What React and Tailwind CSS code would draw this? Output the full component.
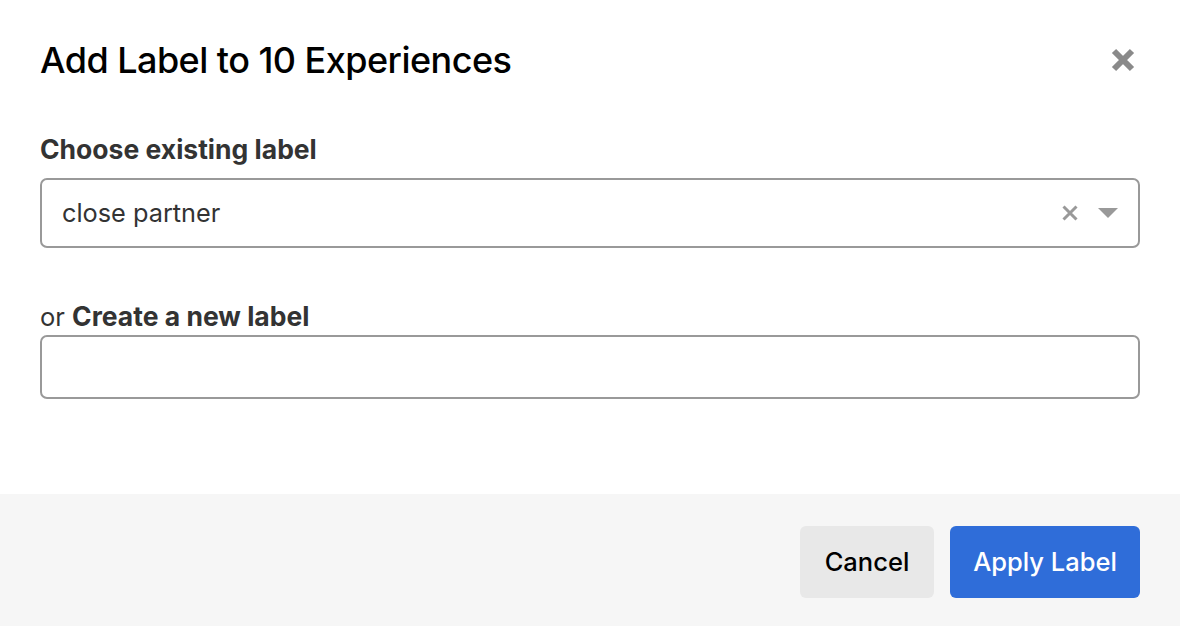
export default function App() {
  return (
    <div className="w-[1180px] h-[626px] bg-white flex flex-col font-['Inter',sans-serif] overflow-hidden">
      {/* Header */}
      <div className="flex items-center justify-between pl-10 pr-11 pt-[40px]">
        <h1 className="text-[36px] leading-[40px] font-medium text-black tracking-[-0.015em]">
          Add Label to 10 Experiences
        </h1>
        <button className="w-[26px] h-[26px] flex items-center justify-center">
          <svg width="26" height="26" viewBox="0 0 26 26">
            <path d="M4 4 L22 22 M22 4 L4 22" stroke="#8a8a8a" strokeWidth="6" />
          </svg>
        </button>
      </div>

      {/* Body */}
      <div className="flex-1 px-10 pt-[54px]">
        <label className="block text-[26.5px] leading-[30px] font-bold text-[#333]">
          Choose existing label
        </label>
        <div className="mt-[14px] h-[70px] border-2 border-[#999] rounded-[7px] flex items-center pl-5 pr-5">
          <span className="flex-1 text-[25.3px] text-[#333]">close partner</span>
          <svg width="16" height="16" viewBox="0 0 16 16" className="mr-[20px]">
            <path d="M1.5 1.5 L14.5 14.5 M14.5 1.5 L1.5 14.5" stroke="#999" strokeWidth="3" />
          </svg>
          <svg width="20" height="10" viewBox="0 0 20 10">
            <path d="M0 0 L20 0 L10 10 Z" fill="#999" />
          </svg>
        </div>

        <label className="block mt-[53px] text-[25.5px] leading-[30px] text-[#333]">
          or <span className="font-bold text-[26.5px]">Create a new label</span>
        </label>
        <div className="mt-[3px] h-[64px] border-2 border-[#999] rounded-[7px]" />
      </div>

      {/* Footer */}
      <div className="h-[132px] bg-[#f6f6f6] flex items-start justify-end gap-4 pr-10 pt-[32px]">
        <button className="h-[72px] w-[134px] rounded-[6px] bg-[#e8e8e8] text-[25.5px] font-medium text-black">
          Cancel
        </button>
        <button className="h-[72px] w-[190px] rounded-[6px] bg-[#2f6dd9] text-[25.5px] font-medium text-white">
          Apply Label
        </button>
      </div>
    </div>
  );
}
